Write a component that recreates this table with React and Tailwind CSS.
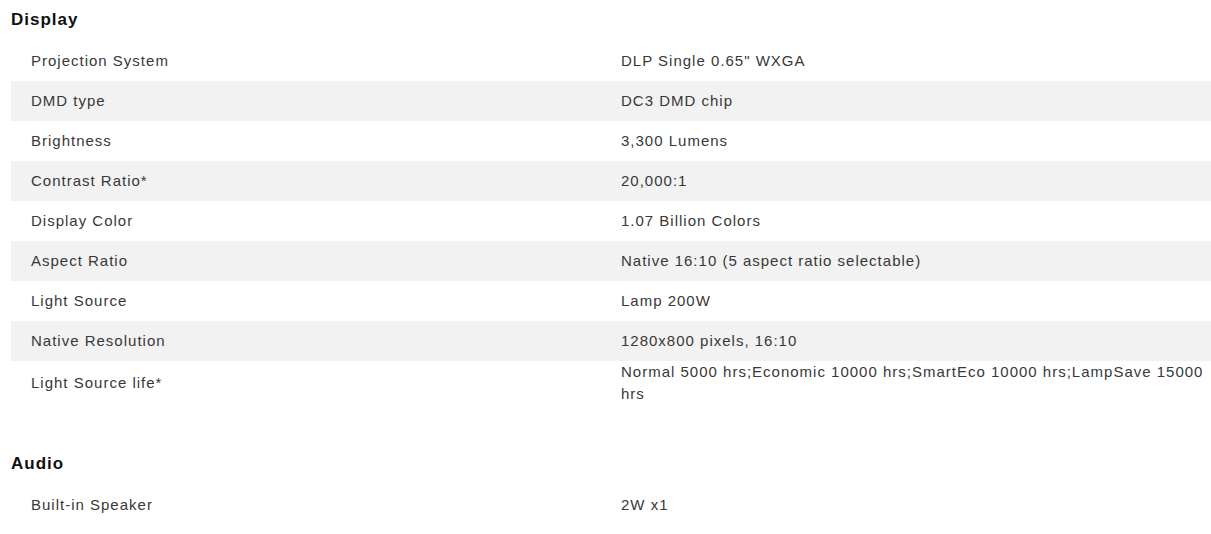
const specs = [
  {
    title: 'Display',
    rows: [
      ['Projection System', 'DLP Single 0.65" WXGA'],
      ['DMD type', 'DC3 DMD chip'],
      ['Brightness', '3,300 Lumens'],
      ['Contrast Ratio*', '20,000:1'],
      ['Display Color', '1.07 Billion Colors'],
      ['Aspect Ratio', 'Native 16:10 (5 aspect ratio selectable)'],
      ['Light Source', 'Lamp 200W'],
      ['Native Resolution', '1280x800 pixels, 16:10'],
      ['Light Source life*', 'Normal 5000 hrs;Economic 10000 hrs;SmartEco 10000 hrs;LampSave 15000 hrs'],
    ],
  },
  {
    title: 'Audio',
    rows: [['Built-in Speaker', '2W x1']],
  },
];

function SpecSection({ title, rows }) {
  return (
    <div className="mb-[39px]">
      <h3 className="flex h-[41px] items-center pb-[2px] text-[17px] font-bold tracking-[1px] text-[#111]">
        {title}
      </h3>
      <div>
        {rows.map(([label, value], i) => (
          <div
            key={label}
            className={`flex min-h-[40px] items-center ${i % 2 === 1 ? 'bg-[#f2f2f2]' : 'bg-white'}`}
          >
            <div className="w-[610px] shrink-0 pl-5">{label}</div>
            <div className="flex-1 pr-[4px]">{value}</div>
          </div>
        ))}
      </div>
    </div>
  );
}

export default function App() {
  return (
    <div className="min-h-screen bg-white pl-[11px] font-['Liberation_Sans',Arial,sans-serif] text-[15px] leading-[22px] tracking-[1px] text-[#383838]">
      {specs.map((s) => (
        <SpecSection key={s.title} title={s.title} rows={s.rows} />
      ))}
    </div>
  );
}
